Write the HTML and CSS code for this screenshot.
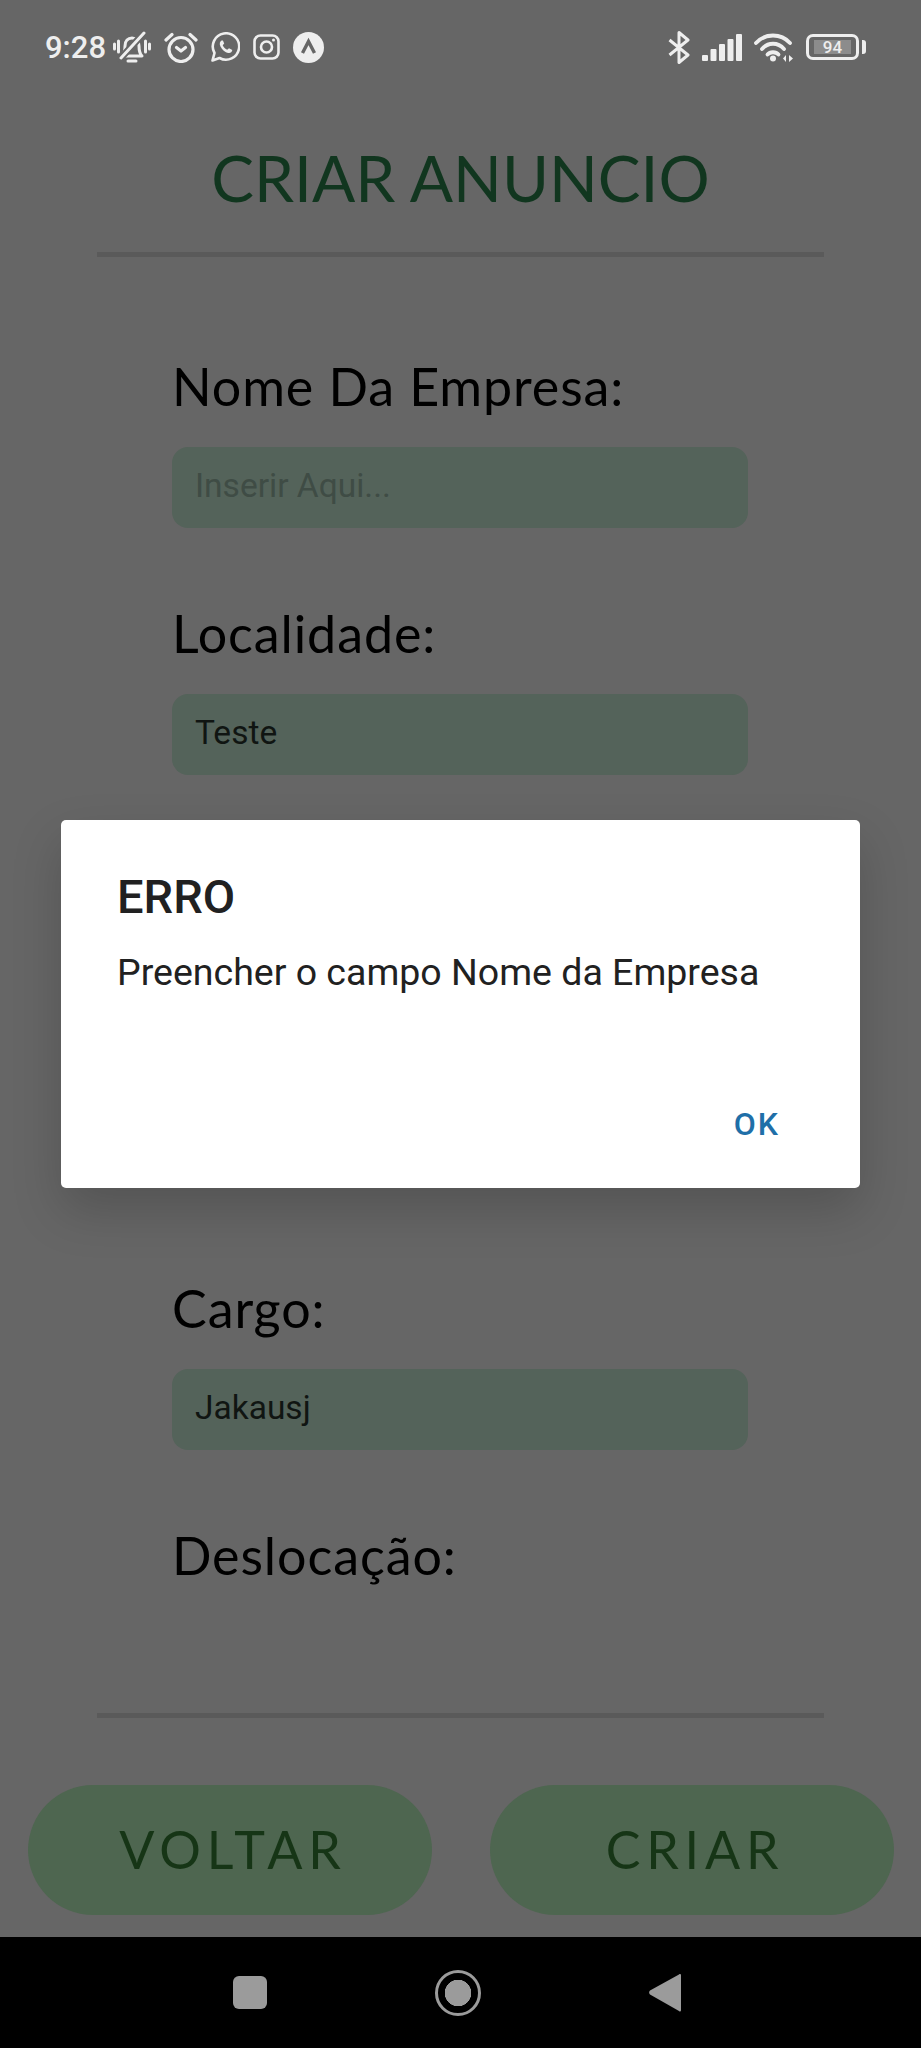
FILE: index.html
```html
<!DOCTYPE html>
<html lang="en">
<head>
    <meta charset="UTF-8">
    <meta name="viewport" content="width=device-width, initial-scale=1.0">
    <title>Criar Anuncio</title>
    <link rel="stylesheet" href="styles.css">
</head>
<body>
    <div class="screen">
        <div class="status-bar">
            <div class="status-left">
                <span class="clock">9:28</span>
                <svg class="icon" width="38" height="32" viewBox="0 0 38 32" fill="none" stroke="#eee" stroke-width="3" stroke-linecap="round" stroke-linejoin="round">
                    <path d="M9 25c2-2 3-4 3-10 0-5 3-8 7-8s7 3 7 8c0 6 1 8 3 10z"/>
                    <path d="M15 30h8"/>
                    <path d="M5.500 10v11M1.500 13v5M32.500 10v11M36.500 13v5"/>
                    <path d="M7 28 31 2" stroke="#666" stroke-width="7"/>
                    <path d="M8 27 31 2"/>
                </svg>
                <svg class="icon" width="34" height="31" viewBox="0 0 34 31" fill="none" stroke="#eee" stroke-width="3.200" stroke-linecap="round" stroke-linejoin="round">
                    <circle cx="17" cy="17.500" r="12"/>
                    <path d="M2 8 8 2.500M32 8 26 2.500"/>
                    <path d="M12.500 15.500 17 19l4.500-3.500"/>
                </svg>
                <svg class="icon" width="29" height="30" viewBox="0 0 29 30" fill="none" stroke="#eee" stroke-width="2.6" stroke-linejoin="round">
                    <path d="M1.500 28.500 3.500 21a13.200 13.200 0 1 1 5 5z"/>
                    <path d="M10.500 8.500c-1.500 1-2.500 3-1 6 1.500 3 4.500 6 8 6.500 2 .3 3.500-1 3.800-3l-3.300-1.800-1.800 1.500c-2-1-3.500-2.500-4.500-4.500l1.500-1.800-1.300-3z" fill="#eee" stroke="none"/>
                </svg>
                <svg class="icon" width="27" height="26" viewBox="0 0 27 26" fill="none" stroke="#eee" stroke-width="2.600">
                    <rect x="1.500" y="1.500" width="24" height="23" rx="6"/>
                    <circle cx="13.500" cy="13" r="5.500"/>
                    <circle cx="20.500" cy="6" r="1.500" fill="#eee" stroke="none"/>
                </svg>
                <svg class="icon" width="31" height="31" viewBox="0 0 31 31">
                    <circle cx="15.500" cy="15.500" r="15.500" fill="#eee"/>
                    <path d="M9.500 21 15.500 9.500l6 11.500" fill="none" stroke="#666" stroke-width="3.400"/>
                </svg>
            </div>
            <div class="status-right">
                <svg class="icon" width="22" height="33" viewBox="0 0 22 33" fill="none" stroke="#eee" stroke-width="3" stroke-linejoin="round">
                    <path d="M1.500 9 20 24 11 31.500v-30L20 9 1.500 24"/>
                </svg>
                <svg class="icon" width="40" height="27" viewBox="0 0 40 27" fill="#eee">
                    <rect x="0" y="21" width="6" height="6" rx="1"/>
                    <rect x="8.500" y="15" width="6" height="12" rx="1"/>
                    <rect x="17" y="10" width="6" height="17" rx="1"/>
                    <rect x="25.500" y="5" width="6" height="22" rx="1"/>
                    <rect x="34" y="0" width="6" height="27" rx="1"/>
                </svg>
                <svg class="icon" width="40" height="30" viewBox="0 0 40 30" fill="none" stroke="#eee" stroke-width="3.800" stroke-linecap="round">
                    <path d="M2 11C11 1 27 1 36 11"/>
                    <path d="M8 17C14 10 24 10 30 17"/>
                    <path d="M13.500 22.500C16 19.500 22 19.500 24.500 22.500"/>
                    <circle cx="19" cy="26.500" r="3" fill="#eee" stroke="none"/>
                    <path d="M29 26.500 32 23v7zM39 26.500 35 23v7z" fill="#eee" stroke="none"/>
                </svg>
                <div class="battery">
                    <div class="battery-level">94</div>
                </div>
            </div>
        </div>

        <h1 class="page-title">CRIAR ANUNCIO</h1>
        <div class="rule"></div>

        <form class="form-area">
            <div class="field">
                <label for="empresa">Nome Da Empresa:</label>
                <input type="text" id="empresa" placeholder="Inserir Aqui...">
            </div>
            <div class="field">
                <label for="localidade">Localidade:</label>
                <input type="text" id="localidade" value="Teste">
            </div>
            <div class="field-covered"></div>
            <div class="field">
                <label for="cargo">Cargo:</label>
                <input type="text" id="cargo" value="Jakausj">
            </div>
            <div class="field">
                <label for="deslocacao">Deslocação:</label>
            </div>
        </form>

        <div class="rule"></div>
        <div class="actions">
            <button type="button" class="pill">VOLTAR</button>
            <button type="button" class="pill">CRIAR</button>
        </div>

        <div class="nav-bar">
            <div class="nav-square"></div>
            <div class="nav-home"></div>
            <svg width="32" height="39" viewBox="0 0 32 39">
                <path d="M30 1.500c1-.8 2-.3 2 1V37c0 1.500-1 2-2 1L1 21.500c-1.200-1-1.200-2.800 0-4z" fill="#9b9b9b"/>
            </svg>
        </div>

        <div class="dialog">
            <h2 class="dialog-title">ERRO</h2>
            <p class="dialog-text">Preencher o campo Nome da Empresa</p>
            <button type="button" class="dialog-ok">OK</button>
        </div>
    </div>
</body>
</html>
```

FILE: styles.css
```css
body {
    margin: 0;
    background-color: #666;
    font-family: 'Roboto', sans-serif;
}

.screen {
    position: relative;
    display: flex;
    flex-direction: column;
    width: 921px;
    height: 2048px;
    overflow: hidden;
    background-color: #666;
}

/* status bar */
.status-bar {
    display: flex;
    justify-content: space-between;
    align-items: center;
    height: 94px;
    padding: 0 62px 0 45px;
    box-sizing: border-box;
}

.status-left,
.status-right {
    display: flex;
    align-items: center;
}

.status-left {
    gap: 13px;
}

.status-right {
    gap: 12px;
}

.clock {
    width: 60px;
    margin-right: -5px;
    font-size: 31px;
    font-weight: 500;
    color: #eee;
}

.icon {
    display: block;
}

.battery {
    position: relative;
    width: 53px;
    height: 26px;
    padding: 3px 5px;
    box-sizing: border-box;
    border: 3px solid #eee;
    border-radius: 7px;
}

.battery::after {
    content: "";
    position: absolute;
    top: 3px;
    right: -10px;
    width: 4px;
    height: 14px;
    border-radius: 0 3px 3px 0;
    background-color: #eee;
}

.battery-level {
    height: 14px;
    background-color: #8c8c8c;
    color: #eee;
    font-size: 17px;
    font-weight: 500;
    line-height: 14px;
    text-align: center;
}

/* header */
.page-title {
    height: 158px;
    margin: 0;
    font-family: 'Lato', sans-serif;
    font-size: 64px;
    font-weight: 400;
    line-height: 168px;
    text-align: center;
    color: #11361f;
}

.rule {
    flex-shrink: 0;
    height: 5px;
    margin: 0 97px;
    background-color: #5a5a5a;
}

/* form */
.form-area {
    flex: 1;
    min-height: 0;
    overflow: hidden;
    padding: 96px 173px 0 172px;
}

.field {
    margin-bottom: 72px;
}

.field label {
    display: block;
    height: 64px;
    margin-bottom: 30px;
    font-family: 'Lato', sans-serif;
    font-size: 52px;
    line-height: 66px;
    letter-spacing: 0.9px;
    color: #000;
}

.field input {
    display: block;
    width: 100%;
    height: 81px;
    padding: 0 23px 4px;
    box-sizing: border-box;
    border: none;
    border-radius: 16px;
    background-color: #54635a;
    font-family: 'Roboto', sans-serif;
    font-size: 33.5px;
    color: #101512;
}

.field input::placeholder {
    color: #3f4c45;
}

.field-covered {
    height: 428px;
}

/* bottom buttons */
.actions {
    display: flex;
    justify-content: space-between;
    padding: 67px 27px 22px 28px;
}

.pill {
    width: 404px;
    height: 130px;
    padding: 0 0 2px 6px;
    border: none;
    border-radius: 65px;
    background-color: #4e6650;
    font-family: 'Lato', sans-serif;
    font-size: 52px;
    letter-spacing: 5.8px;
    color: #163516;
}

/* android nav */
.nav-bar {
    display: flex;
    align-items: center;
    gap: 168px;
    height: 111px;
    padding-left: 233px;
    background-color: #000;
}

.nav-square {
    width: 34px;
    height: 33px;
    border-radius: 6px;
    background-color: #9b9b9b;
}

.nav-home {
    width: 46px;
    height: 46px;
    box-sizing: border-box;
    border: 3px solid #9b9b9b;
    border-radius: 50%;
    background-color: #000;
    background-image: radial-gradient(circle, #9b9b9b 13px, transparent 13.5px);
}

/* dialog */
.dialog {
    position: absolute;
    top: 820px;
    left: 61px;
    display: flex;
    flex-direction: column;
    width: 799px;
    height: 368px;
    padding: 50px 80px 0 56px;
    box-sizing: border-box;
    border-radius: 5px;
    background-color: #fff;
    box-shadow: 0 22px 50px rgba(0, 0, 0, 0.18);
}

.dialog-title {
    margin: 0;
    font-size: 47px;
    font-weight: 500;
    line-height: 54px;
    color: #212121;
}

.dialog-text {
    margin: 24px 0 0;
    font-size: 37.5px;
    line-height: 48px;
    color: #212121;
}

.dialog-ok {
    align-self: flex-end;
    margin-top: 109px;
    padding: 0;
    border: none;
    background: none;
    font-family: 'Roboto', sans-serif;
    font-size: 32px;
    font-weight: 500;
    letter-spacing: 2px;
    color: #1f6fa8;
}
```
